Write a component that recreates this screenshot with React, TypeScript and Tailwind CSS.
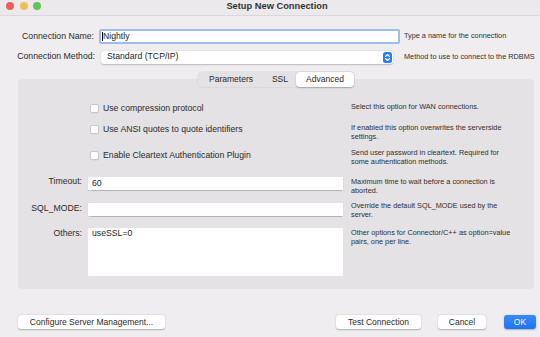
import React from 'react';

// Setup New Connection dialog (MySQL Workbench, macOS look)

const FONT = { fontFamily: '"Liberation Sans", Arial, sans-serif' };

function Checkbox({ label, mt }: { label: string; mt: string }) {
  return (
    <div className={`flex items-center gap-[4px] pl-[2px] ${mt}`}>
      <div className="w-[9px] h-[9px] bg-white border border-[#c9c7c9] rounded-[2px] shadow-[0_0.5px_0.5px_rgba(0,0,0,0.08)]" />
      <span className="text-[8.7px] leading-[9px] text-[#2a2a2a]">{label}</span>
    </div>
  );
}

function Desc({ children }: { children: React.ReactNode }) {
  return <div className="w-[163px] text-[7.3px] leading-[9px] text-[#2f2f2f]">{children}</div>;
}

function Button({ label, className }: { label: string; className: string }) {
  return (
    <div
      className={`h-[14px] flex items-center justify-center rounded-[3px] bg-white text-[8.5px] text-[#2a2a2a] shadow-[0_0.5px_1.5px_rgba(0,0,0,0.28)] ${className}`}
    >
      {label}
    </div>
  );
}

export default function App() {
  return (
    <div className="w-[540px] h-[337px] overflow-hidden bg-[#efedef] flex flex-col" style={FONT}>
      {/* title bar */}
      <div className="relative h-[16px] border-b border-[#dad8da] bg-[#ebe9eb] flex">
        <div className="absolute left-[6px] top-[2px] flex gap-[5.5px]">
          <div className="w-[8px] h-[8px] rounded-full bg-[#ec5f58]" />
          <div className="w-[8px] h-[8px] rounded-full bg-[#f4bd50]" />
          <div className="w-[8px] h-[8px] rounded-full bg-[#5fc555]" />
        </div>
        <div className="w-full pl-[14px] text-center text-[9.3px] leading-[12px] font-bold text-[#333333]">
          Setup New Connection
        </div>
      </div>

      {/* connection name */}
      <div className="flex items-center mt-[13px] h-[15px]">
        <div className="w-[94px] text-right text-[8.7px] text-[#2a2a2a]">Connection Name:</div>
        <div className="ml-[5px] w-[301px] h-[15px] rounded-[2px] border-[2px] border-[#9dbdeb] bg-white flex items-center pl-[1px]">
          <div className="w-[1px] h-[9px] bg-black" />
          <span className="text-[8.7px] text-[#1e1e1e]">Nightly</span>
        </div>
        <div className="ml-[4px] text-[7.3px] text-[#2f2f2f] whitespace-nowrap">Type a name for the connection</div>
      </div>

      {/* connection method */}
      <div className="flex items-center mt-[6px] h-[14px]">
        <div className="w-[95px] text-right text-[8.7px] text-[#2a2a2a]">Connection Method:</div>
        <div className="ml-[6px] w-[292px] h-[13px] rounded-[3px] bg-white shadow-[0_0.5px_1.5px_rgba(0,0,0,0.22)] flex items-center justify-between pl-[6px] pr-[1px]">
          <span className="text-[8.7px] text-[#1e1e1e]">Standard (TCP/IP)</span>
          <div className="w-[9px] h-[11px] rounded-[2.5px] bg-[#2b7df5] flex items-center justify-center">
            <svg width="7" height="9" viewBox="0 0 7 9" fill="none" stroke="white" strokeWidth="1.1" strokeLinecap="round" strokeLinejoin="round">
              <path d="M1.5 3.5 L3.5 1.5 L5.5 3.5" />
              <path d="M1.5 5.5 L3.5 7.5 L5.5 5.5" />
            </svg>
          </div>
        </div>
        <div className="ml-[11px] text-[7.3px] text-[#2f2f2f] whitespace-nowrap">Method to use to connect to the RDBMS</div>
      </div>

      {/* tabs */}
      <div className="relative z-10 flex mt-[8px] pl-[198px]">
        <div className="flex h-[15px] rounded-[4px] bg-[#e4e2e4] shadow-[0_0_0_0.5px_rgba(0,0,0,0.08)] text-[8.5px] text-[#2a2a2a]">
          <div className="w-[66px] flex items-center justify-center">Parameters</div>
          <div className="w-[32px] flex items-center justify-center">SSL</div>
          <div className="w-[58px] flex items-center justify-center rounded-[4px] bg-white shadow-[0_0.5px_1.5px_rgba(0,0,0,0.25)]">
            Advanced
          </div>
        </div>
      </div>

      {/* panel */}
      <div className="-mt-[8px] ml-[18px] w-[516px] h-[210px] rounded-[4px] bg-[#e4e2e4] pt-[22.5px] flex flex-col">
        <div className="flex h-[21px]">
          <div className="w-[70px]" />
          <div className="w-[263px]">
            <Checkbox label="Use compression protocol" mt="mt-[2px]" />
          </div>
          <Desc>Select this option for WAN connections.</Desc>
        </div>
        <div className="flex h-[25px]">
          <div className="w-[70px]" />
          <div className="w-[263px]">
            <Checkbox label="Use ANSI quotes to quote identifiers" mt="mt-[2px]" />
          </div>
          <Desc>If enabled this option overwrites the serverside settings.</Desc>
        </div>
        <div className="flex h-[29px]">
          <div className="w-[70px]" />
          <div className="w-[263px]">
            <Checkbox label="Enable Cleartext Authentication Plugin" mt="mt-[3px]" />
          </div>
          <Desc>Send user password in cleartext. Required for some authentication methods.</Desc>
        </div>
        <div className="flex h-[24px]">
          <div className="w-[64px] text-right text-[8.7px] leading-[9px] text-[#2a2a2a]">Timeout:</div>
          <div className="ml-[6px] w-[255px] h-[13px] mt-[0.5px] bg-white shadow-[0_0.5px_1px_rgba(0,0,0,0.2)] flex items-center pl-[4px] text-[8.7px] text-[#1e1e1e]">
            60
          </div>
          <div className="w-[8px]" />
          <Desc>Maximum time to wait before a connection is aborted.</Desc>
        </div>
        <div className="flex h-[27px]">
          <div className="w-[64px] mt-[3px] text-right text-[8.7px] leading-[9px] text-[#2a2a2a]">SQL_MODE:</div>
          <div className="ml-[6px] w-[255px] h-[13px] mt-[2.5px] bg-white shadow-[0_0.5px_1px_rgba(0,0,0,0.2)]" />
          <div className="w-[8px]" />
          <Desc>Override the default SQL_MODE used by the server.</Desc>
        </div>
        <div className="flex">
          <div className="w-[64px] mt-[1px] text-right text-[8.7px] leading-[9px] text-[#2a2a2a]">Others:</div>
          <div className="ml-[6px] w-[255px] h-[48px] mt-[0.5px] bg-white pl-[4px] pt-[1px] text-[8.7px] leading-[9px] text-[#1e1e1e]">
            useSSL=0
          </div>
          <div className="w-[8px]" />
          <Desc>Other options for Connector/C++ as option=value pairs, one per line.</Desc>
        </div>
      </div>

      {/* buttons */}
      <div className="flex mt-[26px] pl-[18px]">
        <Button label="Configure Server Management..." className="w-[147px]" />
        <Button label="Test Connection" className="ml-[171px] w-[85px]" />
        <Button label="Cancel" className="ml-[17px] w-[48px]" />
        <div className="ml-[18px] w-[32px] h-[14px] rounded-[3px] bg-[linear-gradient(#3a8bf8,#1b74f2)] shadow-[0_0.5px_1.5px_rgba(0,0,0,0.25)] flex items-center justify-center text-[8.5px] text-white">
          OK
        </div>
      </div>
    </div>
  );
}
